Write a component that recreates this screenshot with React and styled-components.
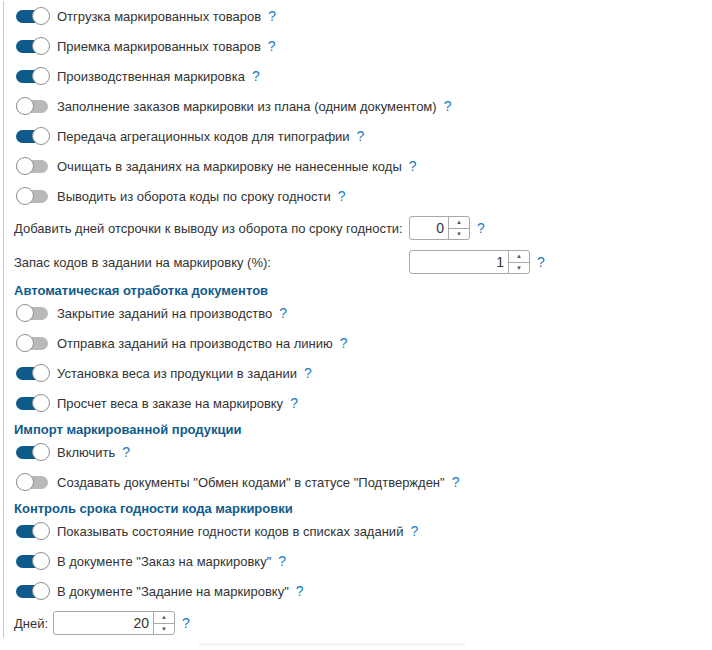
import React from "react";
import styled, { createGlobalStyle } from "styled-components";

const Global = createGlobalStyle`
  html, body { margin: 0; padding: 0; background: #fff; }
  body { font-family: "Liberation Sans", Arial, sans-serif; font-size: 13px; color: #333; }
`;

const Page = styled.div`
  padding-left: 3px;
  padding-top: 1px;
`;

const Panel = styled.div`
  border-left: 1px solid #c8c8c8;
  padding-left: 10px;
  width: 600px;
`;

const ToggleRow = styled.div`
  display: flex;
  align-items: center;
  height: 30px;
  padding-left: 2px;
`;

const Switch = styled.span`
  position: relative;
  width: 34px;
  height: 18px;
  flex: none;
  margin-right: 7px;
  &::before {
    content: "";
    position: absolute;
    left: 0;
    top: 3px;
    width: 32px;
    height: 13px;
    border-radius: 7px;
    background: ${(p) => (p.$on ? "#0d5a8b" : "#b9b9b9")};
  }
  &::after {
    content: "";
    position: absolute;
    top: 0;
    left: ${(p) => (p.$on ? "16px" : "0")};
    width: 16px;
    height: 16px;
    border-radius: 50%;
    background: #fff;
    border: 1px solid #8f8f8f;
  }
`;

const Label = styled.span`
  white-space: nowrap;
  color: #333;
`;

const Help = styled.span`
  color: #1b7bc2;
  font-size: 14px;
  margin-left: 7px;
  font-weight: normal;
  cursor: pointer;
`;

const FieldRow = styled.div`
  display: flex;
  align-items: center;
  height: 34px;
`;

const DaysRow = styled(FieldRow)`
  height: 30px;
  margin-top: 2px;
`;

const FieldLabel = styled.span`
  white-space: nowrap;
  width: ${(p) => p.$w || "auto"};
  flex: none;
  margin-right: ${(p) => p.$mr || "0"};
`;

const Spin = styled.div`
  display: flex;
  width: ${(p) => p.$w}px;
  height: 22px;
  border: 1px solid #a9a9a9;
  border-radius: 3px;
  box-sizing: content-box;
  background: #fff;
`;

const SpinValue = styled.div`
  flex: 1;
  text-align: right;
  padding-right: 4px;
  line-height: 22px;
  font-size: 14px;
  color: #333;
`;

const SpinButtons = styled.div`
  width: 20px;
  border-left: 1px solid #a9a9a9;
  display: flex;
  flex-direction: column;
`;

const SpinBtn = styled.div`
  flex: 1;
  display: flex;
  align-items: center;
  justify-content: center;
  font-size: 6px;
  color: #555;
  & + & { border-top: 1px solid #a9a9a9; }
`;

const Header = styled.div`
  height: 19px;
  padding-top: 4px;
  box-sizing: border-box;
  line-height: 16px;
  font-weight: bold;
  color: #0f5b8c;
  white-space: nowrap;
`;

const Faint = styled.div`
  margin-left: 196px;
  margin-top: 5px;
  width: 266px;
  height: 3px;
  background: #f4f4f4;
`;

const Toggle = ({ on, children }) => (
  <ToggleRow>
    <Switch $on={on} />
    <Label>{children}</Label>
    <Help>?</Help>
  </ToggleRow>
);

const Spinner = ({ w, value }) => (
  <Spin $w={w}>
    <SpinValue>{value}</SpinValue>
    <SpinButtons>
      <SpinBtn>▲</SpinBtn>
      <SpinBtn>▼</SpinBtn>
    </SpinButtons>
  </Spin>
);

export default function App() {
  return (
    <Page>
      <Global />
      <Panel>
        <Toggle on>Отгрузка маркированных товаров</Toggle>
        <Toggle on>Приемка маркированных товаров</Toggle>
        <Toggle on>Производственная маркировка</Toggle>
        <Toggle>Заполнение заказов маркировки из плана (одним документом)</Toggle>
        <Toggle on>Передача агрегационных кодов для типографии</Toggle>
        <Toggle>Очищать в заданиях на маркировку не нанесенные коды</Toggle>
        <Toggle>Выводить из оборота коды по сроку годности</Toggle>
        <FieldRow>
          <FieldLabel $w="395px">Добавить дней отсрочки к выводу из оборота по сроку годности:</FieldLabel>
          <Spinner w={59} value="0" />
          <Help>?</Help>
        </FieldRow>
        <FieldRow>
          <FieldLabel $w="395px">Запас кодов в задании на маркировку (%):</FieldLabel>
          <Spinner w={119} value="1" />
          <Help>?</Help>
        </FieldRow>
        <Header>Автоматическая отработка документов</Header>
        <Toggle>Закрытие заданий на производство</Toggle>
        <Toggle>Отправка заданий на производство на линию</Toggle>
        <Toggle on>Установка веса из продукции в задании</Toggle>
        <Toggle on>Просчет веса в заказе на маркировку</Toggle>
        <Header>Импорт маркированной продукции</Header>
        <Toggle on>Включить</Toggle>
        <Toggle>Создавать документы "Обмен кодами" в статусе "Подтвержден"</Toggle>
        <Header>Контроль срока годности кода маркировки</Header>
        <Toggle on>Показывать состояние годности кодов в списках заданий</Toggle>
        <Toggle on>В документе "Заказ на маркировку"</Toggle>
        <Toggle on>В документе "Задание на маркировку"</Toggle>
        <DaysRow>
          <FieldLabel $mr="5px">Дней:</FieldLabel>
          <Spinner w={120} value="20" />
          <Help>?</Help>
        </DaysRow>
      </Panel>
      <Faint />
    </Page>
  );
}
